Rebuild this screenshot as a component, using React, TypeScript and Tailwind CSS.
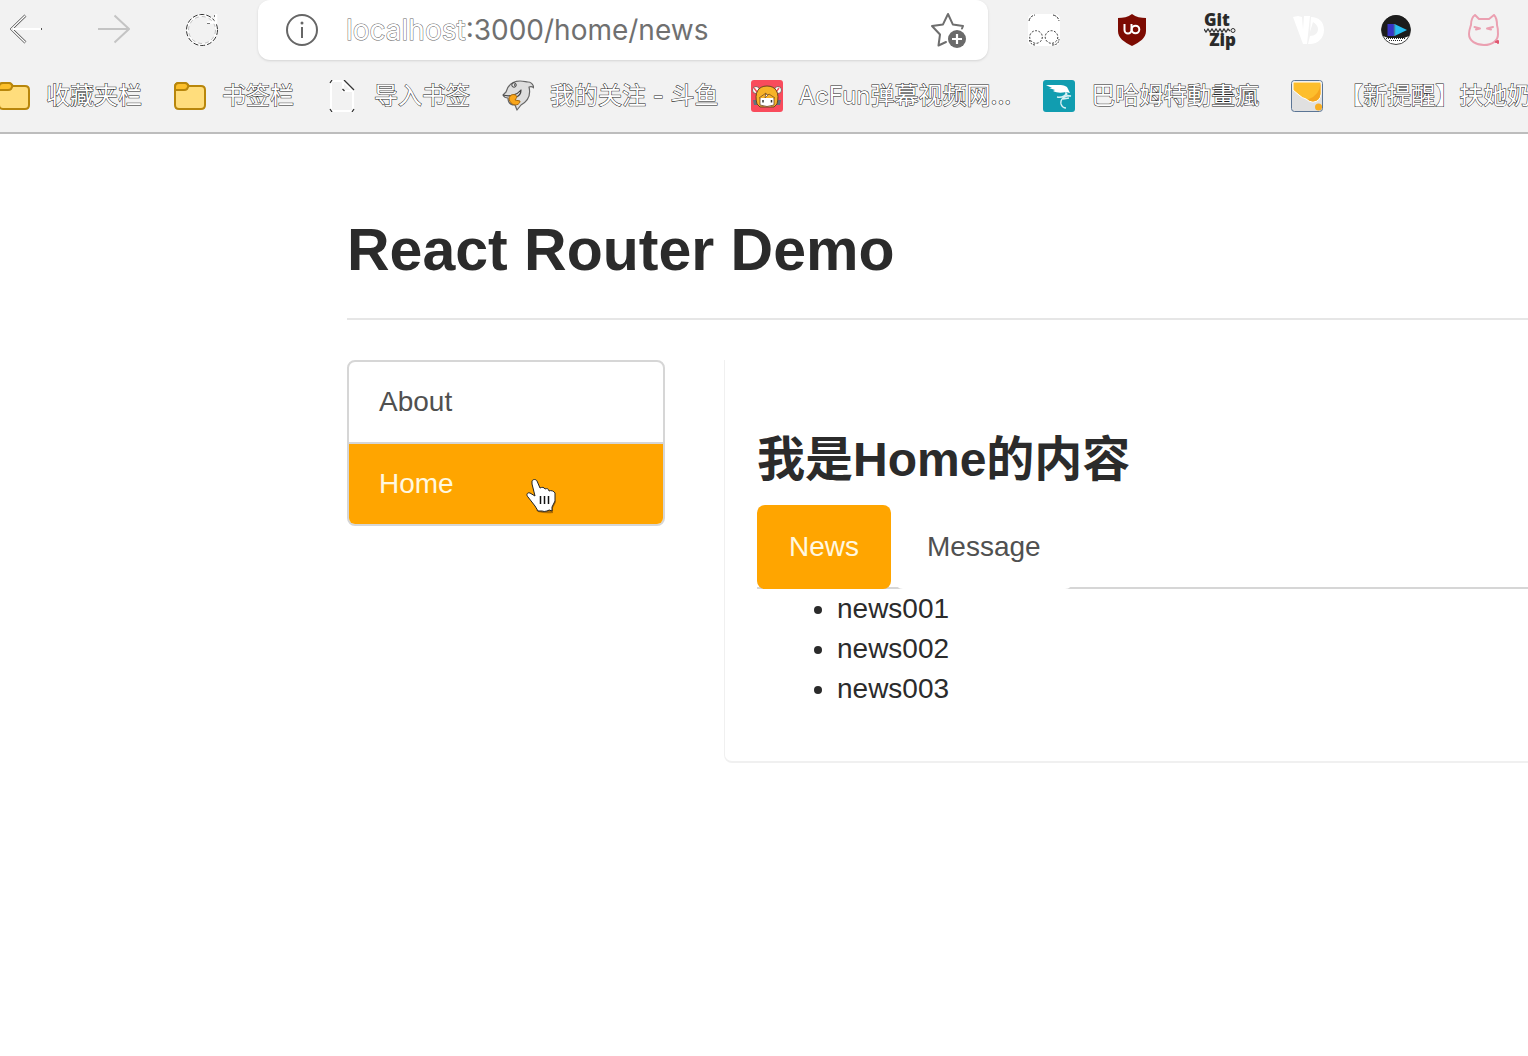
import React, { useState } from "react";

const outlined = "text-white [-webkit-text-stroke:1px_#222] [paint-order:stroke_fill]";

function BackIcon() {
  return (
    <svg viewBox="0 0 32 32" className="size-8" fill="none">
      <path d="M15.500 1.500 1.500 15l14 13.500" stroke="#333" strokeWidth="2.600" />
      <path d="M15.500 1.500 1.500 15l14 13.500" stroke="#fff" strokeWidth="1.500" />
      <path d="M3 15h28" stroke="#fff" strokeWidth="2" />
      <path d="M31.500 14v2" stroke="#555" />
    </svg>
  );
}

function ForwardIcon() {
  return (
    <svg viewBox="0 0 32 32" className="size-8" fill="none" stroke="#c4c4c4" strokeWidth="2">
      <path d="M0 15h31M16.500 1.500 31 15 16.500 28.500" />
    </svg>
  );
}

function ReloadIcon() {
  return (
    <svg viewBox="0 0 32 32" className="size-8" fill="none">
      <circle cx="16" cy="16" r="14.500" stroke="#fff" strokeWidth="2" />
      <circle cx="16" cy="16" r="15.500" stroke="#333" strokeWidth="1" strokeDasharray="5 2" />
      <circle cx="16" cy="16" r="13.500" stroke="#999" strokeWidth=".6" strokeDasharray="4 3" />
      <path d="M30 0v8.500h-9" stroke="#fff" strokeWidth="2.500" />
      <path d="M21 9.500h3M28.500 1v2" stroke="#555" strokeWidth=".8" />
    </svg>
  );
}

function InfoIcon() {
  return (
    <svg viewBox="0 0 32 32" className="size-8 shrink-0" fill="none" stroke="#666" strokeWidth="2">
      <circle cx="16" cy="16" r="15" />
      <path d="M16 13v11" />
      <circle cx="16" cy="9" r="1.500" fill="#666" stroke="none" />
    </svg>
  );
}

function StarIcon() {
  return (
    <svg viewBox="0 0 36 36" className="size-9" fill="none">
      <path
        d="M16 30 8.500 33.500 10 22.500 2 14l11-1.600L18 2l4.800 10.400L33 14l-1 2.500"
        stroke="#6e6e6e"
        strokeWidth="2"
        strokeLinejoin="round"
        strokeLinecap="round"
      />
      <circle cx="27" cy="27" r="9" fill="#6a6a6a" />
      <path d="M22 27h10M27 22v10" stroke="#fff" strokeWidth="2.200" />
    </svg>
  );
}

function MaskIcon() {
  return (
    <svg viewBox="0 0 32 32" className="size-8" fill="none">
      <rect width="32" height="32" rx="5" fill="#fff" />
      <g stroke="#333" strokeWidth="1">
        <path d="M1 7q1-5 6-6M25 1q5 1 6 6" strokeDasharray="3 1" />
        <circle cx="8" cy="23" r="6.300" strokeDasharray="2 1.500" />
        <circle cx="23.500" cy="23" r="6.300" strokeDasharray="2 1.500" />
        <path d="M1.500 26q1 5 6 5M24 31q7 0 7-6" strokeDasharray="2 1" />
      </g>
    </svg>
  );
}

function ShieldIcon() {
  return (
    <svg viewBox="0 0 32 32" className="size-8" fill="none">
      <path d="M16 0C12 3 7 4 2 4v13c0 7 6 11 14 15 8-4 14-8 14-15V4c-5 0-10-1-14-4Z" fill="#7c0b02" />
      <path d="M8.500 10v6a3.500 3.500 0 0 0 7 0v-6" stroke="#fff" strokeWidth="2" />
      <circle cx="19.500" cy="15.500" r="3.800" stroke="#fff" strokeWidth="2" />
    </svg>
  );
}

function GitZipIcon() {
  return (
    <span className="flex size-8 flex-col items-start justify-between font-['Open_Sans'] text-[17px] font-extrabold text-[#2b2b2b]">
      <span className="h-3 leading-3">Git</span>
      <svg viewBox="0 0 32 5" className="h-[5px] w-8 shrink-0" fill="none" stroke="#333">
        <path d="m0 1 2 3 2-3 2 3 2-3 2 3 2-3 2 3 2-3 2 3 2-3 2 3 2-3 2 2" strokeWidth="1.300" />
        <circle cx="29" cy="2.500" r="2" />
      </svg>
      <span className="h-3 self-end leading-3">Zip</span>
    </span>
  );
}

function VdIcon() {
  return (
    <svg viewBox="0 0 32 32" className="size-8" fill="#fff">
      <path d="M1 3 6 2l4 1 1 13 1-14h6l-3 28h-4Z" />
      <path d="M19 3c8 0 13 5 13 13s-6 14-14 14h-2l2-8c5 0 8-3 8-7 0-3-2-5-5-7l-3 10Z" />
    </svg>
  );
}

function PlayerIcon() {
  return (
    <svg viewBox="0 0 32 32" className="size-8">
      <circle cx="16" cy="16" r="14.500" fill="#fff" stroke="#444" />
      <path d="M3 22a14.500 14.500 0 1 1 26 0l-5 2H8Z" fill="#1c1c1c" />
      <path d="M6 24.500h20M9 26.500h14" stroke="#222" strokeWidth="1" strokeDasharray="1 1" />
      <path d="M7.500 10h7v12h-7Z" fill="#3733c4" />
      <path d="M14.500 10 27 16l-12.500 6Z" fill="#28bdf0" />
      <path d="M14.500 10v12" stroke="#3f7ea6" strokeWidth="1.500" />
    </svg>
  );
}

function CatIcon() {
  return (
    <svg viewBox="0 0 32 32" className="size-8" fill="none" stroke="#eba0b1" strokeWidth="2" strokeLinecap="round" strokeLinejoin="round">
      <path d="M11 5h10l5-4c2 2 3 6 3 10 1 3 1 5 1 9 0 7-6 11-14 11S1 27 1 20c0-4 1-6 2-9 0-4 1-8 4-10Z" />
      <path d="M6.500 13 12 14.500 8 15.500M25 13l-6 1.500 4 1" />
      <path d="m28 28 2-1v2" stroke="#e0566f" />
    </svg>
  );
}

function FolderIcon() {
  return (
    <svg viewBox="0 0 32 32" className="size-8 shrink-0" stroke="#b8860b" strokeWidth="2" strokeLinejoin="round">
      <path d="M1 7q0-4 4-4h6q2 0 4 3h12q4 0 4 4v15q0 4-4 4H5q-4 0-4-4Z" fill="#ffdd7c" />
      <path d="M1 7q0-4 4-4h6q2 0 3.500 3L13 9q-1 1-3 1H1Z" fill="#fcbf2a" />
    </svg>
  );
}

function PageIcon() {
  return (
    <svg viewBox="0 0 32 32" className="size-8 shrink-0" fill="none">
      <path d="M5 1h12l10 10v20H5Z" stroke="#fff" strokeWidth="2" />
      <path d="M17 1v10h10" stroke="#fff" strokeWidth="2" />
      <path d="m18 0 10 10M16.500 9l2 2M4 3l2-3M4 29l2 3M28 29l-2 3" stroke="#333" strokeWidth="1.300" />
    </svg>
  );
}

function SharkIcon() {
  return (
    <svg viewBox="0 0 32 32" className="size-8 shrink-0" strokeLinejoin="round">
      <path
        d="M4 12C6 5 10 1 18 1c4 0 6 1 8 1 3 0 5 2 6 6-2-2-3-2-5-1 2 8-1 14-8 18l-4 5-2-5c-5 0-7-3-7-7-2 0-4-1-5-3Z"
        fill="#dedede"
        stroke="#666"
        strokeWidth="1.200"
      />
      <path d="M1 15c7 2 14 0 18-5 0 4-2 6-5 7" fill="none" stroke="#444" strokeWidth="1.200" />
      <circle cx="12" cy="5" r="2.200" fill="#fff" stroke="#333" />
      <circle cx="12.500" cy="5" r=".8" fill="#222" />
      <path d="M7 19c0-5 7-6 8-2l-2 3 5 1c0 5-9 6-11-2Z" fill="#f9a61a" stroke="#a8690e" />
    </svg>
  );
}

function AcFunIcon() {
  return (
    <svg viewBox="0 0 32 32" className="size-8 shrink-0">
      <rect width="32" height="32" rx="3" fill="#f94b5c" />
      <g fill="#fff" stroke="#5b3d35" strokeWidth=".7">
        <circle cx="5" cy="10" r="3.500" />
        <circle cx="27" cy="10" r="3.500" />
      </g>
      <path d="m3 8 3 4M28 8l-3 4" stroke="#f94b5c" strokeWidth="1.500" />
      <path d="M2 20h5v5H3ZM25 20h5l-1 5h-4Z" fill="#5f7480" />
      <path d="M6 24C3 13 7 6 16 6s13 7 10 18l-3 3H9Z" fill="#f7b328" stroke="#6a4322" />
      <path d="M9 25v-7l6-4 8 4v7q-7 3-14 0Z" fill="#fff" stroke="#6a4322" strokeWidth=".8" />
      <path d="m8 18 7-5-1 5 4-4 6 4" fill="#f7b328" stroke="#6a4322" strokeWidth=".7" />
      <path d="M12 20v2.500M20.500 20v2.500" stroke="#333" strokeWidth="1.500" />
    </svg>
  );
}

function BahamutIcon() {
  return (
    <svg viewBox="0 0 32 32" className="size-8 shrink-0" fill="none">
      <rect width="32" height="32" rx="3" fill="#119db0" />
      <path d="M3 5h13c5 0 8 1 9 4l2 4-4-1c-5 1-9 1-13-1l2-1-6-2 3 0Z" fill="#fff" />
      <path d="M23 12c-1 4 3 4 5 4-6-1-11 3-10 8 1 3 3 4 5 4M14 17c5 1 8-1 10-4M20 19l6-1" stroke="#d8f0f4" strokeWidth="1.400" />
    </svg>
  );
}

function HornIcon() {
  return (
    <svg viewBox="0 0 32 32" className="size-8 shrink-0">
      <rect x=".5" y=".5" width="31" height="31" rx="3" fill="#e0e0e0" stroke="#5b7595" />
      <path d="M2 2h28v12q-1 8-8 8-4 0-7-3-4-1-7-4L2 10Z" fill="#fdbe2c" stroke="#fff" strokeWidth="1" />
      <path d="M29.500 3v11q-1 7-7.500 7.500-3 0-5-2Q29 15 29.500 3Z" fill="#f5a51d" />
      <circle cx="27.500" cy="27" r="3.500" fill="#f8ae22" />
    </svg>
  );
}

function HandCursor() {
  return (
    <svg viewBox="0 0 32 36" className="pointer-events-none absolute top-[34px] left-[177px] h-9 w-8" strokeLinejoin="round">
      <path
        d="M10 32h15l4-10 1 2-3 6v5q-8 1-15-1Z"
        fill="#8a5200"
        opacity=".7"
      />
      <path
        d="M6 3c1-2 4-2 5 0l3 7c2-1 4-1 5 1 2-1 4 0 4 2 2-1 5 0 6 2v8l-3 6v4q-3-2-5 0-3 1-5 0h-4l-3-5-7-9c-2-2-1-5 2-4l5 3L6 6Z"
        fill="#fff"
        stroke="#222"
      />
      <path d="M14.500 18v8M18.500 18v8M22.500 18v8" stroke="#111" strokeWidth="1.500" />
    </svg>
  );
}

const extensions = [
  { name: "Mask", Icon: MaskIcon },
  { name: "Shield", Icon: ShieldIcon },
  { name: "Archive", Icon: GitZipIcon },
  { name: "Video", Icon: VdIcon },
  { name: "Player", Icon: PlayerIcon },
  { name: "Cat", Icon: CatIcon },
];

const bookmarks = [
  { title: "收藏夹栏", Icon: FolderIcon },
  { title: "书签栏", Icon: FolderIcon },
  { title: "导入书签", Icon: PageIcon },
  { title: "我的关注 - 斗鱼", Icon: SharkIcon },
  { title: "AcFun弹幕视频网...", Icon: AcFunIcon },
  { title: "巴哈姆特動畫瘋", Icon: BahamutIcon },
  { title: "【新提醒】扶她奶", Icon: HornIcon },
];

function Toolbar() {
  const [path, setPath] = useState(":3000/home/news");
  return (
    <header className="overflow-hidden border-b-2 border-[#bdbdbd] bg-[#f2f2f2] font-[Inter,'Noto_Sans_CJK_SC',sans-serif]">
      <div className="flex h-15 items-center gap-10 pr-7 pl-2.5">
        <div className="flex gap-14">
          <button aria-label="Back"><BackIcon /></button>
          <button aria-label="Forward"><ForwardIcon /></button>
          <button aria-label="Reload"><ReloadIcon /></button>
        </div>
        <div className="flex h-full min-w-0 flex-1 items-center rounded-xl bg-white pr-[22px] pl-7 text-[28px] shadow-sm">
          <InfoIcon />
          <label htmlFor="address" className="ml-7 text-white [-webkit-text-stroke:1px_#666] [paint-order:stroke_fill]">
            localhost
          </label>
          <input
            id="address"
            value={path}
            onChange={(e) => setPath(e.target.value)}
            className="min-w-0 flex-1 bg-transparent text-[#707070] outline-none"
          />
          <button aria-label="Add to favourites"><StarIcon /></button>
        </div>
        <div className="flex gap-14">
          {extensions.map(({ name, Icon }) => (
            <button key={name} aria-label={name}><Icon /></button>
          ))}
        </div>
      </div>
      <nav className="-ml-0.5 flex h-18 items-center gap-8 text-2xl whitespace-nowrap">
        {bookmarks.map(({ title, Icon }) => (
          <a key={title} href="#" className="flex shrink-0 items-center gap-4">
            <Icon />
            <span className={outlined}>{title}</span>
          </a>
        ))}
      </nav>
    </header>
  );
}

export default function App() {
  return (
    <div className="min-h-screen overflow-hidden bg-white font-['Liberation_Sans','Noto_Sans_CJK_SC',sans-serif] text-[28px] leading-10 text-[#2b2b2b]">
      <Toolbar />
      <main className="pt-[82px] pl-[347px]">
        <div className="mb-10 border-b-2 border-[#e6e6e6] pb-[34px]">
          <h1 className="text-[59px] leading-[68px] font-bold">React Router Demo</h1>
        </div>
        <div className="flex gap-[59px]">
          <nav className="w-[318px] shrink-0 self-start overflow-hidden rounded-lg border-2 border-[#d6d6d6]">
            <a href="#about" className="block border-b-2 border-[#d6d6d6] px-[30px] py-5 text-[#505050]">About</a>
            <a href="#home" className="relative block bg-[#ffa500] px-[30px] py-5 text-[#fff8e0]">
              Home
              <HandCursor />
            </a>
          </nav>
          <section className="min-w-0 flex-1 rounded-bl-lg border-b-2 border-l border-[#f0f0f0] pt-[67px] pb-[52px] pl-8">
            <h2 className="mb-3 text-5xl leading-[66px] font-bold">我是Home的内容</h2>
            <ul className="flex gap-1 border-b-2 border-[#d6d6d6]">
              <li className="-mb-0.5">
                <a href="#news" className="block rounded-lg bg-[#ffa500] px-8 py-[22px] text-[#fff8e0]">News</a>
              </li>
              <li className="-mb-0.5">
                <a href="#message" className="block rounded-lg bg-white px-8 py-[22px] text-[#505050]">Message</a>
              </li>
            </ul>
            <ul className="list-disc pl-20">
              <li>news001</li>
              <li>news002</li>
              <li>news003</li>
            </ul>
          </section>
        </div>
      </main>
    </div>
  );
}
